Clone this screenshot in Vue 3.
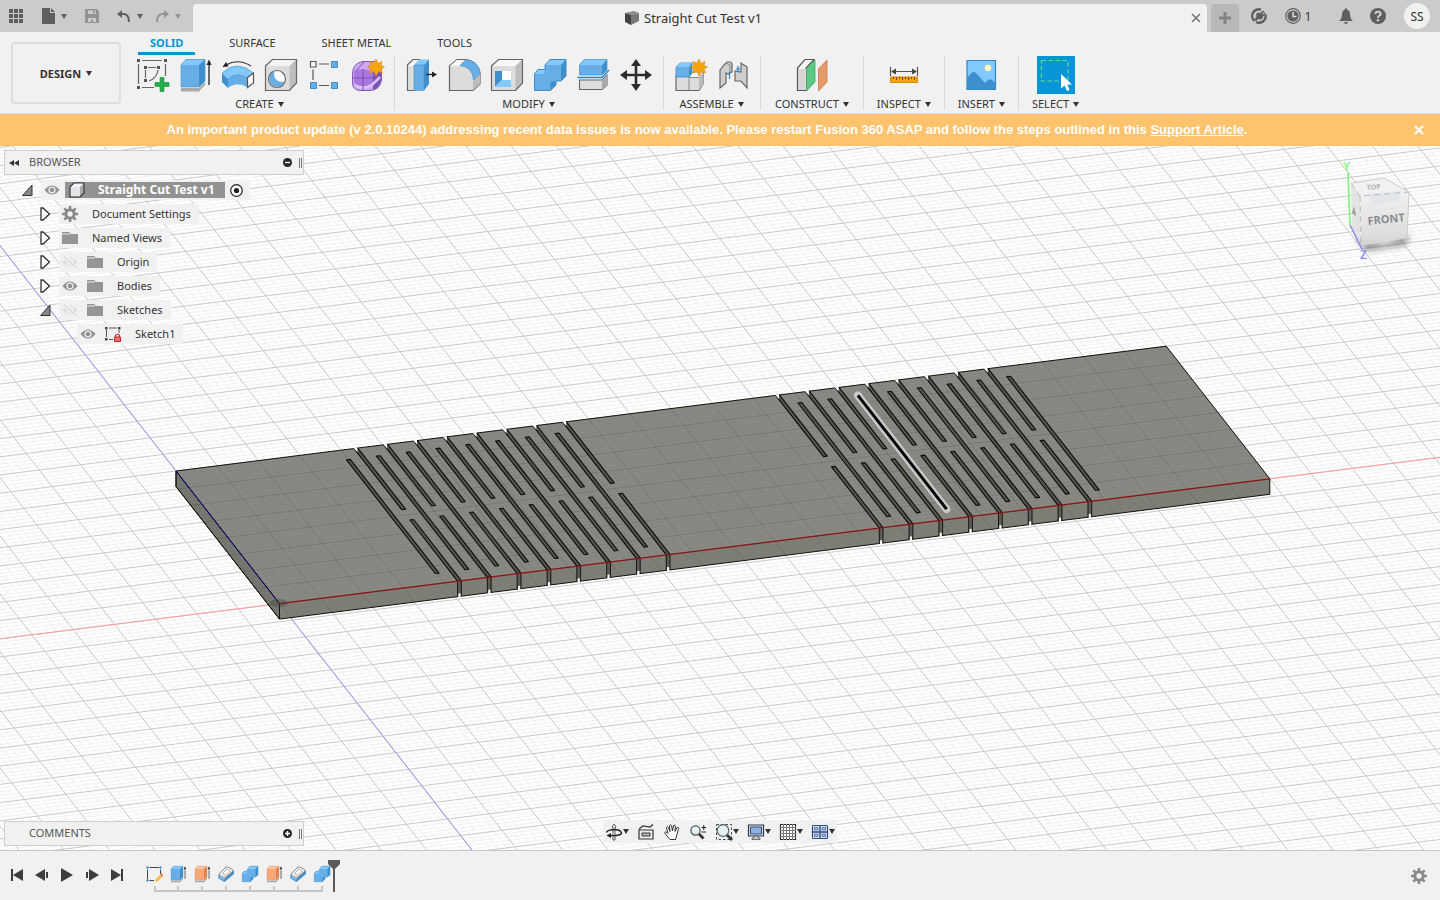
<template>
  <div class="app">
    <header class="titlebar">
      <nav class="quick" aria-label="Quick access">
        <button class="plain" aria-label="Data panel"><svg width="14" height="14" viewBox="0 0 14 14" v-html="glyphs.grid"></svg></button>
        <button class="plain" aria-label="File"><svg width="14" height="16" viewBox="0 0 14 16" v-html="glyphs.file"></svg><i class="caret"></i></button>
        <button class="plain dim" aria-label="Save"><svg width="14" height="14" viewBox="0 0 14 14" v-html="glyphs.save"></svg></button>
        <div class="history">
          <button class="plain" aria-label="Undo"><svg width="14" height="14" viewBox="0 0 14 14" v-html="glyphs.undo"></svg><i class="caret"></i></button>
          <button class="plain dim" aria-label="Redo"><svg width="14" height="14" viewBox="0 0 14 14" v-html="glyphs.redo"></svg><i class="caret"></i></button>
        </div>
      </nav>
      <div class="doc-tab">
        <svg width="16" height="16" viewBox="0 0 16 16" v-html="glyphs.doc"></svg>
        <span class="title">{{ documentName }}</span>
        <button class="plain close" aria-label="Close document"><svg width="10" height="10" viewBox="0 0 10 10"><path d="M1 1L9 9M9 1L1 9" stroke="#757575" stroke-width="1.6" /></svg></button>
      </div>
      <button class="new-tab" aria-label="New design"><svg width="14" height="14" viewBox="0 0 14 14"><path d="M7 1V13M1 7H13" stroke="#838383" stroke-width="3" /></svg></button>
      <div class="status">
        <button class="plain" aria-label="Extensions"><svg width="16" height="16" viewBox="0 0 16 16" v-html="glyphs.plug"></svg></button>
        <button class="plain jobs" aria-label="Job status"><svg width="16" height="16" viewBox="0 0 16 16" v-html="glyphs.clock"></svg>1</button>
        <button class="plain" aria-label="Notifications"><svg width="14" height="16" viewBox="0 0 14 16" v-html="glyphs.bell"></svg></button>
        <button class="plain" aria-label="Help"><svg width="16" height="16" viewBox="0 0 16 16" v-html="glyphs.help"></svg></button>
        <button class="avatar">SS</button>
      </div>
    </header>

    <section class="ribbon">
      <button class="workspace">DESIGN <i class="caret"></i></button>
      <div class="ribbon-main">
        <nav class="tabs">
          <button v-for="tab in tabs" :key="tab" :class="{ active: tab === activeTab }" @click="activeTab = tab">{{ tab }}</button>
        </nav>
        <div class="groups">
          <div v-for="group in groups" :key="group.name" class="group">
            <div class="tools">
              <button v-for="tool in group.tools" :key="tool" class="tool" :class="{ on: tool === 'select' }" :aria-label="tool">
                <svg width="36" height="36" viewBox="0 0 36 36" v-html="tools[tool]"></svg>
              </button>
            </div>
            <button class="group-name">{{ group.name }}<i class="caret"></i></button>
          </div>
        </div>
      </div>
    </section>

    <aside v-if="showBanner" class="banner">
      <p>An important product update (v 2.0.10244) addressing recent data issues is now available. Please restart Fusion 360 ASAP and follow the steps outlined in this <a href="#">Support Article</a>.</p>
      <button class="plain" aria-label="Dismiss" @click="showBanner = false"><svg width="10" height="10" viewBox="0 0 10 10"><path d="M1 1L9 9M9 1L1 9" stroke="#fff" stroke-width="2.2" /></svg></button>
    </aside>

    <main class="stage">
      <svg class="scene" viewBox="0 146 1440 704" preserveAspectRatio="xMidYMid slice">
        <defs>
          <clipPath id="body-clip"><path :d="outline" /></clipPath>
          <linearGradient id="cube-face" x1="0" y1="0" x2="0" y2="1"><stop offset="0" stop-color="#f0f0f1" /><stop offset="1" stop-color="#d6d6d8" /></linearGradient>
          <filter id="soft" x="-30%" y="-60%" width="160%" height="220%"><feGaussianBlur stdDeviation="3" /></filter>
        </defs>
        <rect x="0" y="146" width="1440" height="704" fill="#fff" />
        <path :d="minorGrid" class="minor" />
        <path :d="majorGrid" class="major" />
        <path :d="line(-12, 0, 0, 0)" stroke="#ff9c9c" />
        <path :d="line(24, 0, 32, 0)" stroke="#ff9c9c" />
        <path :d="line(0, -18, 0, 0)" stroke="#9292f5" />
        <path :d="line(0, 8, 0, 28)" stroke="#9292f5" />

        <!-- plate -->
        <path :d="outline" fill="#888982" />
        <path :d="leftFace" fill="#76776e" />
        <path :d="frontFace" fill="#7e7f76" />
        <g clip-path="url(#body-clip)">
          <path :d="minorGrid" class="minor on-body" />
          <path :d="majorGrid" class="major on-body" />
        </g>
        <path :d="outline" class="edge" />
        <path :d="leftFace" class="edge" />
        <path :d="line(0, 0, 0, 8)" stroke="#00007c" />
        <path v-for="(slot, i) in slots" :key="i" :d="slot" class="slot" />
        <g v-for="(n, i) in notches" :key="'n' + i">
          <path :d="n.wall" fill="#5c5d56" />
          <path :d="n.edges" class="edge" />
          <path :d="n.tip" fill="#fff" />
          <path :d="n.back" fill="#fff" />
        </g>
        <path :d="line(0, 0, 24, 0)" stroke="#8c1313" stroke-width="1.3" />
        <ellipse cx="279" cy="603" rx="9" ry="4" fill="#3a3b35" opacity=".35" />
        <path :d="picked" class="picked-halo" />
        <path :d="picked" class="picked" />

        <!-- orientation cube -->
        <g>
          <path d="M1356 238L1384 244L1410 234L1406 245L1366 251Z" fill="#666" opacity=".7" filter="url(#soft)" />
          <path d="M1351 183L1384 178L1409 192L1360 196Z" fill="#f1f1f2" opacity=".9" />
          <path d="M1351 183L1360 196V247L1352 230Z" fill="#dfdfe1" opacity=".85" />
          <path d="M1360 196L1409 192L1407 238L1361 246Z" fill="url(#cube-face)" opacity=".92" />
          <path d="M1369 194L1401 191L1399 200L1374 205Z" fill="#dfe3ea" opacity=".8" />
          <path d="M1351 183L1360 196L1409 192M1360 196L1361 246" stroke="#bbb" fill="none" stroke-dasharray="6 4" />
          <path d="M1351 183L1384 178L1409 192L1407 238" stroke="#ccc" fill="none" />
          <text x="1368" y="225" class="cube-text" transform="rotate(-6 1368 225)">FRONT</text>
          <text x="1367" y="190" class="cube-top" transform="rotate(-5 1367 190)">TOP</text>
          <path d="M1352 213L1354 206L1356 216Z" fill="#999" />
          <path d="M1348 172L1350 225" stroke="#7df07d" stroke-width="1.6" />
          <path d="M1350 225L1362 249" stroke="#8c8cf0" stroke-width="1.6" />
          <text x="1343" y="171" class="axis y">Y</text>
          <text x="1360" y="259" class="axis z">Z</text>
        </g>
      </svg>

      <aside class="browser">
        <div class="panel">
          <svg width="10" height="6" viewBox="0 0 10 6"><path d="M5 0V6L0 3ZM10 0V6L5 3Z" fill="#333" /></svg>
          <h2>BROWSER</h2>
          <button class="plain" aria-label="Collapse browser"><svg width="9" height="9" viewBox="0 0 9 9"><circle cx="4.500" cy="4.500" r="4.500" fill="#262626" /><path d="M2 4.500H7" stroke="#fff" stroke-width="1.400" /></svg></button>
          <i class="grip"></i>
        </div>
        <ul class="tree">
          <li v-for="node in nodes" :key="node.name" :class="'depth-' + node.depth">
            <svg v-if="node.state" class="twist" width="12" height="14" viewBox="0 0 12 14" v-html="glyphs[node.state]"></svg>
            <div class="node">
              <svg v-for="icon in node.icons" :key="icon" width="16" height="16" viewBox="0 0 16 16" v-html="glyphs[icon]"></svg>
              <span v-if="node.root" class="root">
                <svg width="16" height="16" viewBox="0 0 16 16" v-html="glyphs.part"></svg>{{ node.name }}
              </span>
              <span v-else class="name">{{ node.name }}</span>
              <svg v-if="node.root" class="target" width="13" height="13" viewBox="0 0 13 13"><circle cx="6.500" cy="6.500" r="5.800" fill="#fff" stroke="#222" stroke-width="1.200" /><circle cx="6.500" cy="6.500" r="2.600" fill="#222" /></svg>
            </div>
          </li>
        </ul>
      </aside>

      <div class="panel comments">
        <h2>COMMENTS</h2>
        <button class="plain" aria-label="Expand comments"><svg width="9" height="9" viewBox="0 0 9 9"><circle cx="4.500" cy="4.500" r="4.500" fill="#262626" /><path d="M2 4.500H7M4.500 2V7" stroke="#fff" stroke-width="1.400" /></svg></button>
        <i class="grip"></i>
      </div>

      <nav class="navbar" aria-label="Navigation">
        <button v-for="item in navigation" :key="item.icon" class="plain" :aria-label="item.icon">
          <svg width="18" height="18" viewBox="0 0 18 18" v-html="glyphs[item.icon]"></svg>
          <i v-if="item.menu" class="caret"></i>
        </button>
      </nav>
    </main>

    <footer class="timeline">
      <div class="player">
        <button v-for="p in player" :key="p.name" class="plain" :aria-label="p.name"><svg width="14" height="14" viewBox="0 0 14 14"><path :d="p.d" fill="#3d3d3d" /></svg></button>
      </div>
      <div class="features">
        <div class="feature-row">
          <button v-for="(f, i) in features" :key="i" class="plain" :aria-label="f"><svg width="18" height="18" viewBox="0 0 36 36" v-html="tools[f]"></svg></button>
        </div>
        <svg width="192" height="6" viewBox="0 0 192 6"><path d="M13 0V5H180V0M36 0V5M60 0V5M84 0V5M108 0V5M132 0V5M156 0V5" fill="none" stroke="#c6c6c6" stroke-width="2" /></svg>
        <svg class="marker" width="12" height="32" viewBox="0 0 12 32"><path d="M0 0H12V4L7 9V32H5V9L0 4Z" fill="#5a5a5a" /></svg>
      </div>
      <button class="plain settings" aria-label="Timeline settings"><svg width="16" height="16" viewBox="0 0 16 16" v-html="glyphs.gear"></svg></button>
    </footer>
  </div>
</template>

<script setup>
import { ref } from 'vue';

const documentName = 'Straight Cut Test v1';
const tabs = ['SOLID', 'SURFACE', 'SHEET METAL', 'TOOLS'];
const activeTab = ref('SOLID');
const showBanner = ref(true);

const groups = [
  { name: 'CREATE', tools: ['sketch', 'extrude', 'revolve', 'hole', 'pattern', 'form'] },
  { name: 'MODIFY', tools: ['press', 'fillet', 'shell', 'combine', 'split', 'move'] },
  { name: 'ASSEMBLE', tools: ['component', 'joint'] },
  { name: 'CONSTRUCT', tools: ['plane'] },
  { name: 'INSPECT', tools: ['measure'] },
  { name: 'INSERT', tools: ['image'] },
  { name: 'SELECT', tools: ['select'] },
];

const nodes = [
  { name: documentName, depth: 0, state: 'open', icons: ['eye'], root: true },
  { name: 'Document Settings', depth: 1, state: 'closed', icons: ['gear'] },
  { name: 'Named Views', depth: 1, state: 'closed', icons: ['folder'] },
  { name: 'Origin', depth: 1, state: 'closed', icons: ['hidden', 'folder'] },
  { name: 'Bodies', depth: 1, state: 'closed', icons: ['eye', 'folder'] },
  { name: 'Sketches', depth: 1, state: 'open', icons: ['hidden', 'folder'] },
  { name: 'Sketch1', depth: 2, icons: ['eye', 'locked'] },
];

const navigation = [
  { icon: 'orbit', menu: true },
  { icon: 'look' },
  { icon: 'pan' },
  { icon: 'zoom' },
  { icon: 'fit', menu: true },
  { icon: 'display', menu: true },
  { icon: 'gridset', menu: true },
  { icon: 'views', menu: true },
];

const player = [
  { name: 'Start', d: 'M1 1H3V13H1ZM13 1V13L3 7Z' },
  { name: 'Step back', d: 'M10 1V13L0 7ZM11 4H13V10H11Z' },
  { name: 'Play', d: 'M1 0L13 7L1 14Z' },
  { name: 'Step forward', d: 'M1 4H3V10H1ZM4 1L14 7L4 13Z' },
  { name: 'End', d: 'M1 1L11 7L1 13ZM11 1H13V13H11Z' },
];

const features = ['sketchEdit', 'extrude', 'extrudeCut', 'chamfer', 'combine', 'extrudeCut', 'chamfer', 'combine'];

// sketch plane: one unit is one major grid cell, z runs towards the viewer
const project = (x, z, drop = 0) => {
  const px = 176 + x * 41.26 + z * 12.94;
  const py = 471 - x * 5.2 + z * 16.57 + drop;
  return `${px.toFixed(1)} ${py.toFixed(1)}`;
};
const line = (x1, z1, x2, z2) => x1 === x2
  ? `M${project(x1, z1)}L${project(x2, z2)}`
  : `M${project(x1, z1 + 8)}L${project(x2, z2 + 8)}`;
const poly = (...points) => 'M' + points.join('L') + 'Z';

const gridPath = (step, skip) => {
  let d = '';
  for (let i = -20 * step; i <= 52 * step; i++) {
    if (skip && i % step === 0) continue;
    const v = i / step;
    d += `M${project(v, -40)}L${project(v, 50)}M${project(-20, v)}L${project(52, v)}`;
  }
  return d;
};
const majorGrid = gridPath(1, false);
const minorGrid = gridPath(5, true);

const T = 15.5;
const outline = poly(project(0, 0), project(24, 0), project(24, 8), project(24, 8, T), project(0, 8, T), project(0, 0, T));
const leftFace = poly(project(0, 0), project(0, 8), project(0, 8, T), project(0, 0, T));
const frontFace = poly(project(0, 8), project(24, 8), project(24, 8, T), project(0, 8, T));

const W = 0.045;
const cut = (x, z1, z2) => poly(project(x - W, z1), project(x + W, z1), project(x + W, z2), project(x - W, z2));
const slots = [];
const notches = [];
for (let k = 0; k < 16; k++) {
  const x = 4 + k * 0.3613;
  for (const s of [x, 24 - x]) {
    if (k % 2 === 0) {
      slots.push(cut(s, 0.57, 7.43));
      continue;
    }
    slots.push(cut(s, 0, 3.69), cut(s, 4.31, 8));
    notches.push({
      wall: poly(project(s - W, 8), project(s + W, 8), project(s + W, 8, T), project(s - W, 8, T)),
      edges: `M${project(s - W, 8)}L${project(s - W, 8, T)}M${project(s + W, 8)}L${project(s + W, 8, T)}`,
      tip: poly(project(s - W + 0.02, 8, T - 3), project(s + W - 0.02, 8, T - 3), project(s + W - 0.02, 8, T + 2), project(s - W + 0.02, 8, T + 2)),
      back: poly(project(s - W - 0.02, 0, -1), project(s + W - 0.01, 0, -1), project(s + W - 0.01, 0, 4)),
    });
  }
}
const pickedX = 24 - (4 + 10 * 0.3613) - 0.04;
const picked = `M${project(pickedX, 0.57)}L${project(pickedX, 7.43)}`;

const star = '<path d="M27 2L29 6.500L33 4.500L32 8.500L35.500 10L32 12L33.500 16L29.500 14.500L27 19L25 14.500L20.500 16L22 12L18.500 10L22 8L20.500 4.500L25 6Z" fill="#f7a50c" stroke="#e08c00" stroke-width=".6"/>';
const box = (front, top, side, edge) =>
  `<path d="M4 8L9 2.500H28V24L22 30H4Z" fill="${front}"/><path d="M4 8L9 2.500H28L22 8Z" fill="${top}"/><path d="M22 8L28 2.500V24L22 30Z" fill="${side}"/><path d="M4 31H22L28 25V28L22 34.500H4Z" fill="#aaa"/><path d="M4 8L9 2.500H28V24L22 30H4Z" fill="none" stroke="${edge}" stroke-width=".6"/><path d="M32 28V6" stroke="#222" stroke-width="1.300"/><path d="M29.500 8L32 2.500L34.500 8Z" fill="#222"/>`;

const tools = {
  sketch: '<path d="M8 3.500H28M4.500 7V27M8 30.500H20M31.500 7V19M14 10.500H22M11.500 13V21M24 13Q23 21 15 24" fill="none" stroke="#666" stroke-width="1.200"/><path d="M3 2h3v3H3zM30 2h3v3h-3zM3 29h3v3H3zM10 9h3v3h-3zM23 9h3v3h-3zM10 22h3v3h-3z" fill="#555"/><path d="M26 20.500h4v5h5v4h-5v5h-4v-5h-5v-4h5z" fill="#27ae4e" stroke="#16943b" stroke-width=".6"/>',
  extrude: box('#67aee6', '#85c8fb', '#3f8fcb', '#4192cf'),
  extrudeCut: box('#f8a878', '#fdc8a0', '#dd8551', '#cf7d4a'),
  revolve: '<path d="M2 16Q17 2 33.500 16L28 21Q17 13 8 22Z" fill="#85c8fb"/><path d="M2 16L8 22V31L2 25Z" fill="#3f8fcb"/><path d="M8 22Q17 14 27 20.500V30Q17 24 8 31Z" fill="#67aee6"/><path d="M2 16Q17 2 33.500 16M8 22Q17 14 27 20.500" fill="none" stroke="#4192cf" stroke-width=".7"/><path d="M27.500 20.500L33.500 16V26L27.500 30.500Z" fill="#fff" stroke="#555" stroke-width="1.200"/><path d="M6 8Q18 1 31 9" fill="none" stroke="#333" stroke-width="1.200"/><path d="M2.500 10L6 5L8.500 9.500Z" fill="#222"/>',
  hole: '<path d="M2.500 9L9.500 2.500H33.500V26L26.500 33.500H2.500Z" fill="#dcdcdc"/><path d="M2.500 9L9.500 2.500H33.500L26.500 9Z" fill="#f3f3f3"/><path d="M26.500 9L33.500 2.500V26L26.500 33.500Z" fill="#bebebe"/><path d="M2.500 9L9.500 2.500H33.500V26L26.500 33.500H2.500Z" fill="none" stroke="#666" stroke-width="1.200"/><circle cx="14" cy="22" r="8.500" fill="#fff" stroke="#666" stroke-width="1.200"/><path d="M11 15A7.500 7.500 0 1 0 21 25A8 8 0 0 1 11 15Z" fill="#67aee6" stroke="#3f8fcb" stroke-width=".6"/>',
  pattern: '<path d="M13 7H23M7 12.500V23M13 28.500H23" stroke="#555" stroke-width="1.200"/><path d="M4.500 4.500h5.500v5.500H4.500z" fill="#fff" stroke="#555" stroke-width="1.200"/><path d="M25.500 4.500h6v6h-6zM4.500 25.500h6v6h-6zM25.500 25.500h6v6h-6z" fill="#67aee6" stroke="#3f8fcb"/>',
  form: '<path d="M3.500 17Q3.500 6 14 4.500H25Q32.500 6 32.500 15V23Q31 33 21 33.500H11Q3.500 33 3.500 26Z" fill="#cfa6f5" stroke="#8458b5"/><path d="M5 14Q14 10 24 15V26Q20 30 12 29Q5 29 5 24Z" fill="#a878e0"/><path d="M24 15L32 9V24Q30 31 24 33Z" fill="#7d53b5"/><path d="M6 28Q14 34 24 27L31 20" stroke="#dcc4fa" stroke-width="2.500" fill="none"/><path d="M14 12V33M4 21H24L32 17M7 14L15 5M22 14L28 6" stroke="#7d50ab" fill="none"/>' + star,
  press: '<path d="M4.500 8L10 2.500H17V28L11 33.500H4.500Z" fill="#f5f5f5" stroke="#666" stroke-width="1.200"/><path d="M5 9H11V33H5Z" fill="#dcdcdc"/><path d="M11 8L16 2.500H26L21 8Z" fill="#85c8fb"/><path d="M11 8H21V33.500H11Z" fill="#67aee6" stroke="#4192cf" stroke-width=".6"/><path d="M21 8L26 2.500V27L21 33.500Z" fill="#3f8fcb"/><path d="M23 17.500H30" stroke="#222" stroke-width="1.300"/><path d="M29 14.500L34 17.500L29 20.500Z" fill="#222"/>',
  fillet: '<path d="M3.500 9L11 2.500H19Q32 4 34 17V27L27 33.500H3.500Z" fill="#dcdcdc" stroke="#666" stroke-width="1.200"/><path d="M4 9L11 3H21L14 9Z" fill="#f8f8f8"/><path d="M27 24L34 17V27L27 33Z" fill="#bbb"/><path d="M14 8.500L20 2.500Q32 4 34.500 16L27.500 23Q27 10 14 8.500Z" fill="#67aee6" stroke="#3f8fcb" stroke-width=".7"/>',
  shell: '<path d="M2.500 9L9.500 2.500H33.500V26L26.500 33.500H2.500Z" fill="#dcdcdc"/><path d="M2.500 9L9.500 2.500H33.500L26.500 9Z" fill="#f8f8f8"/><path d="M26.500 9L33.500 2.500V26L26.500 33.500Z" fill="#bebebe"/><path d="M2.500 9L9.500 2.500H33.500V26L26.500 33.500H2.500Z" fill="none" stroke="#666" stroke-width="1.200"/><path d="M6 14H22V30H6Z" fill="#fff"/><path d="M6 14L13 14V23L6 30Z" fill="#3f8fcb"/><path d="M6 30L13 23H22V30Z" fill="#85c8fb"/>',
  combine: '<path d="M2.500 17L6 12.500H13V8L18 2.500H34V19L29 24H24V28L18.500 33.500H2.500Z" fill="#67aee6"/><path d="M13 8L18 2.500H34L29 8ZM2.500 17L6 12.500H13L12 17Z" fill="#85c8fb"/><path d="M29 8L34 2.500V19L29 24ZM18.500 25L24 24V28L18.500 33.500Z" fill="#3f8fcb"/><path d="M2.500 17L6 12.500H13V8L18 2.500H34V19L29 24H24V28L18.500 33.500H2.500Z" fill="none" stroke="#3384c2" stroke-width=".9"/>',
  split: '<path d="M4.500 8L9 2.500H32L27 8Z" fill="#85c8fb"/><path d="M4.500 8H27V18H4.500Z" fill="#67aee6"/><path d="M27 8L32 2.500V13L27 18Z" fill="#3f8fcb"/><path d="M4.500 8L9 2.500H32V13L27 18H4.500Z" fill="none" stroke="#3f8fcb" stroke-width=".7"/><path d="M2.500 20.500H27L34 13" fill="none" stroke="#1787d8" stroke-width="1.300"/><path d="M4.500 23H27L32 18V28L27 32.500H4.500Z" fill="#dcdcdc" stroke="#666" stroke-width="1.100"/><path d="M27 23L32 18V28L27 32.500Z" fill="#aaa"/>',
  move: '<path d="M18 6V30M6 18H30" stroke="#2d2d2d" stroke-width="2.600"/><path d="M18 2L23 9H13ZM18 34L23 27H13ZM2 18L9 13V23ZM34 18L27 13V23Z" fill="#2d2d2d"/>',
  component: '<path d="M4 19H17L21 15H31V27L27 33.500H4Z" fill="#dcdcdc" stroke="#666" stroke-width="1.200"/><path d="M17 20L20 15.500H31L27 20Z" fill="#f6f6f6"/><path d="M27 20L31 15.500V28L27 33Z" fill="#bbb"/><path d="M17 19V33M17 20.500H27" stroke="#888" fill="none"/><path d="M4 10L8 6H20V16L17 20H4Z" fill="#67aee6" stroke="#3f8fcb" stroke-width=".8"/><path d="M4 10L8 6H20L17 10Z" fill="#85c8fb"/><path d="M17 10L20 6V16L17 20Z" fill="#3f8fcb"/>' + star,
  joint: '<path d="M5 13L9 8L12 5H15Q17 5 17 8V15L13 17L11 16V26L5 31Z" fill="#cfcfcf" stroke="#666" stroke-width="1.200"/><path d="M32 10L26 6V15L20 14V24L26 24L32 31Z" fill="#cfcfcf" stroke="#666" stroke-width="1.200"/><path d="M11 6L15 8V16" stroke="#888" fill="none"/><path d="M14.500 15V22M23 9V15M21 12H25" stroke="#1787d8" stroke-width="1.200"/>',
  plane: '<path d="M3.500 11L11 2.500H20L12 11V33.500H3.500Z" fill="#f6f6f6" stroke="#555" stroke-width="1.200"/><path d="M4 12H12V33H4Z" fill="#d6d6d6"/><path d="M12.500 12L21 3V25L12.500 34Z" fill="#5bc884" stroke="#3aa863" stroke-width=".8"/><path d="M24.500 12L33 3V25L24.500 34Z" fill="#e69a68" stroke="#c47b4a" stroke-width=".8"/>',
  measure: '<path d="M4.500 10V19M31.500 10V19M7 14.500H29" stroke="#555" stroke-width="1.200"/><path d="M5 14.500L10 11.500V17.500ZM31 14.500L26 11.500V17.500Z" fill="#444"/><path d="M4.500 20H31.500V25.500H4.500Z" fill="#f7a50c" stroke="#d98a00"/><path d="M7.500 20V22M10.500 20V23M13.500 20V22M16.500 20V23M19.500 20V22M22.500 20V23M25.500 20V22M28.500 20V23" stroke="#7a4b00"/>',
  image: '<path d="M4 3.500H32.500V32.500H4Z" fill="#80c8fd" stroke="#3384c2" stroke-width="1.200"/><path d="M4 21L9 15.500Q11 14.500 13 16L22 26L25 23Q27 21.500 29 23L32.500 26V32H4Z" fill="#3d90cd"/><circle cx="25" cy="11" r="3.300" fill="#fdfdd0" stroke="#d8d88a" stroke-width=".6"/>',
  select: '<path d="M3.500 3.500H30V24H3.500Z" fill="none" stroke="#65d98a" stroke-width="1.200" stroke-dasharray="4.500 2.500"/><path d="M23 17V31.500L26.500 28.500L29 34L31.500 33L29.500 27.500H34Z" fill="#fff"/>',
  sketchEdit: '<path d="M9 5H28M5 9V28M31 9V18M9 31H18" fill="none" stroke="#444" stroke-width="2"/><path d="M3 3h4v4H3zM29 3h4v4h-4zM3 29h4v4H3z" fill="#1787d8"/><path d="M20 34L22 28L31 19L35 23L26 32Z" fill="#f5b93e"/><path d="M31 19L33 17L36 21L35 23Z" fill="#e33"/>',
  chamfer: '<path d="M2 20L14 28L34 11V18L15 34L2 26Z" fill="#3f8fcb"/><path d="M2 20L14 28V34L2 26Z" fill="#67aee6"/><path d="M4 18L18 4Q22 3 31 9Q33 12 30 14L16 25Q12 25 4 20Z" fill="#f0f0f0" stroke="#666" stroke-width="1.500"/><path d="M11 17L20 8L26 12L17 20Z" fill="#fff" stroke="#888" stroke-width="1.200"/>',
};

const glyphs = {
  grid: '<path d="M0 0h4v4H0zM5 0h4v4H5zM10 0h4v4h-4zM0 5h4v4H0zM5 5h4v4H5zM10 5h4v4h-4zM0 10h4v4H0zM5 10h4v4H5zM10 10h4v4h-4z" fill="#5f5f5f"/>',
  file: '<path d="M1 0H9V5H14V16H1ZM10 0L14 4H10Z" fill="#5f5f5f"/>',
  save: '<path d="M0 0H12L14 2V14H0Z" fill="#5f5f5f"/><path d="M3 1.500H11V5H3ZM3 9H11V13H3Z" fill="#cbcbcb"/><path d="M8 2H10V4.500H8ZM6 10.500H8V14H6Z" fill="#5f5f5f"/>',
  undo: '<path d="M5 1V9L0 5Z" fill="#5f5f5f"/><path d="M4 5H7Q12 5.500 12 13" fill="none" stroke="#5f5f5f" stroke-width="2"/>',
  redo: '<path d="M9 1V9L14 5Z" fill="#5f5f5f"/><path d="M10 5H7Q2 5.500 2 13" fill="none" stroke="#5f5f5f" stroke-width="2"/>',
  doc: '<path d="M1 3L10 1L15 3L7 5Z" fill="#8a8a8a"/><path d="M1 3L7 5V15L1 12Z" fill="#444"/><path d="M7 5L15 3V11L7 15Z" fill="#777"/>',
  plug: '<path d="M3.500 13A6.700 6.700 0 0 1 10 1.600M14.600 7A6.700 6.700 0 0 1 5 14" fill="none" stroke="#5f5f5f" stroke-width="2.400"/><path d="M5.500 8L5 6L7 4.500L9 5L12 2.500L13.500 3.500L11 6L11.500 6.500L14 4.500L15 6L12 8.500L11.500 10.500L9.500 11.500L7.500 11L5 13L3.500 12Z" fill="#5f5f5f"/>',
  clock: '<circle cx="8" cy="8" r="7.300" fill="none" stroke="#5f5f5f" stroke-width="1.200"/><circle cx="8" cy="8" r="5.600" fill="#5f5f5f"/><path d="M8 4V8.500H11.500" stroke="#ddd" stroke-width="1.500" fill="none"/>',
  bell: '<path d="M7 0Q8 0 8 1.500Q11 2.500 11 6Q11 11 14 13H0Q3 11 3 6Q3 2.500 6 1.500Q6 0 7 0ZM5 14H9Q8.500 16 7 16Q5.500 16 5 14Z" fill="#5f5f5f"/>',
  help: '<circle cx="8" cy="8" r="8" fill="#5f5f5f"/><path d="M5.300 6Q5.500 3.600 8 3.600Q10.600 3.600 10.600 6Q10.600 7.300 9 8Q8 8.500 8 10" fill="none" stroke="#d6d6d6" stroke-width="1.900"/><circle cx="8" cy="12.200" r="1.200" fill="#d6d6d6"/>',
  open: '<path d="M11 2V12.500H1.500Z" fill="#888" stroke="#333"/>',
  closed: '<path d="M2 1H4L10.500 7L4 13H2Z" fill="#fff" stroke="#333" stroke-width="1.300"/>',
  eye: '<path d="M.5 8Q8-1 15.500 8Q8 17 .5 8Z" fill="#909090"/><circle cx="8" cy="8" r="3.600" fill="#eee"/><circle cx="8" cy="8" r="2.200" fill="#909090"/>',
  hidden: '<path d="M.5 8Q8-1 15.500 8Q8 17 .5 8Z" fill="#dedede"/><circle cx="8" cy="8" r="3.600" fill="#f1f1f1"/><circle cx="8" cy="8" r="2" fill="#dedede"/><path d="M2 2.500L14 13.500" stroke="#f1f1f1" stroke-width="3"/><path d="M2 2.500L14 13.500" stroke="#d8d8d8" stroke-width="1.200"/>',
  gear: '<circle cx="8" cy="8" r="4.200" fill="none" stroke="#8a8a8a" stroke-width="3"/><path d="M8 0V3M8 13V16M0 8H3M13 8H16M2.300 2.300L4.400 4.400M11.600 11.600L13.700 13.700M13.700 2.300L11.600 4.400M4.400 11.600L2.300 13.700" stroke="#8a8a8a" stroke-width="2.600"/>',
  folder: '<path d="M0 2H7L9 4H16V14H0Z" fill="#959595"/><path d="M0 4H8" stroke="#e8e8e8"/>',
  part: '<path d="M1 5L5 1H15V11L11 15H1Z" fill="#f6f6f8"/><path d="M11 5L15 1V11L11 15Z" fill="#aaa"/><path d="M1 5H11V15H1Z" fill="#e4e4e8"/><path d="M1 5L5 1H15V11L11 15H1Z" fill="none" stroke="#333" stroke-width="1.100"/>',
  locked: '<path d="M4 2H12M1.500 4V11M14 4V7M4 13.500H8" stroke="#555"/><path d="M0 1h2.500v2.500H0zM13 1h2.500v2.500H13zM0 12h2.500v2.500H0z" fill="#444"/><path d="M9.500 11H15.500V15.500H9.500Z" fill="#e87070" stroke="#c22"/><path d="M10.500 11V9.500Q12.500 7 14.500 9.500V11" fill="none" stroke="#c22" stroke-width="1.200"/>',
  orbit: '<path d="M9 1L11 4H10V17H8V4H7Z" fill="#fff" stroke="#333" stroke-width=".8"/><path d="M5 12.500Q17 13 16.500 9.500Q15 6.500 9 6.500Q2 7 1.500 9.500" fill="none" stroke="#222" stroke-width="1.300"/><path d="M1.500 12.500L6 10V15Z" fill="#222"/>',
  look: '<path d="M2 7H16V16H2Z" fill="#eee" stroke="#333" stroke-width="1.200"/><path d="M5 10H13V13H5Z" fill="#bbb" stroke="#333"/><path d="M2 6L6 3L13 4L16 1.500" fill="none" stroke="#333" stroke-width="1.200"/>',
  pan: '<path d="M5.500 15L1.500 9.500Q2 8 4 9.500L5 10.500L3.500 4.500Q4.500 3 5.500 4.500L7 8.500L6.500 2.500Q8 1 8.500 2.500L9.500 8L10.500 2.500Q12 1.500 12.300 3L12 8.500L14 4.500Q15.500 4 15.500 5.500L14 11.500L12.500 16.500H7Z" fill="#fff" stroke="#333"/>',
  zoom: '<circle cx="6.500" cy="7.500" r="4.600" fill="#e4f0f2" stroke="#455" stroke-width="1.200"/><path d="M10 11L14.500 15.500" stroke="#333" stroke-width="2.600"/><path d="M12.500 4.500H17M14.750 2V7M12.500 9H17" stroke="#222"/>',
  fit: '<path d="M1.500 1.500H16.500V16.500H1.500Z" fill="none" stroke="#444" stroke-dasharray="2.500 2"/><circle cx="8" cy="7.500" r="5.800" fill="#e4f0f2" stroke="#566" stroke-width="1.200"/><path d="M12 12L17 17" stroke="#333" stroke-width="2.800"/>',
  display: '<path d="M1.500 2H16.500V13H1.500Z" fill="#dfe4ec" stroke="#334" stroke-width="1.200"/><path d="M3.500 4H14.500V11H3.500Z" fill="#8fb0df" stroke="#3a4d7a"/><path d="M7 13H11V15H13V16.500H5V15H7Z" fill="#ccc" stroke="#444" stroke-width=".7"/>',
  gridset: '<path d="M1.500 1.500H16.500V16.500H1.500Z" fill="#fff" stroke="#333" stroke-width="1.200"/><path d="M4.500 1V17M7.500 1V17M10.500 1V17M13.500 1V17M1 4.500H17M1 7.500H17M1 10.500H17M1 13.500H17" stroke="#777"/>',
  views: '<rect x="1.500" y="2.500" width="15" height="13" rx="1" fill="#dbe6f5" stroke="#2f4a7c" stroke-width="1.200"/><path d="M9 2V16M1 9H17" stroke="#2f4a7c" stroke-width="1.400"/><path d="M3.500 4.500H7V7H3.500ZM11 4.500H14.500V7H11ZM3.500 11H7V13.500H3.500ZM11 11H14.500V13.500H11Z" fill="#9db9e4" stroke="#54709f" stroke-width=".8"/>',
};
</script>

<style>
body {
  margin: 0;
}
</style>

<style scoped>
.app {
  display: flex;
  flex-direction: column;
  height: 100vh;
  overflow: hidden;
  background: #f1f1f1;
  color: #333;
  font-family: "Noto Sans", "Open Sans", sans-serif;
  font-size: 12px;
}

button {
  font: inherit;
  color: inherit;
  cursor: pointer;
}

svg {
  display: block;
  flex: none;
}

.plain {
  display: flex;
  align-items: center;
  gap: 6px;
  padding: 0;
  border: 0;
  background: none;
}

.caret {
  border: 3px solid transparent;
  border-top: 5px solid #333;
  border-bottom: 0;
}

.titlebar {
  display: flex;
  flex: none;
  height: 32px;
  background: #cbcbcb;
}

.quick {
  display: flex;
  align-items: center;
  gap: 18px;
  box-sizing: border-box;
  width: 193px;
  padding-left: 9px;
}

.quick .caret {
  border-top-color: #5f5f5f;
}

.history {
  display: flex;
  gap: 12px;
}

.dim {
  opacity: 0.5;
}

.doc-tab {
  display: flex;
  flex: 1;
  align-items: center;
  gap: 4px;
  margin-top: 4px;
  padding-right: 6px;
  border-radius: 4px 4px 0 0;
  background: #f1f1f1;
}

.doc-tab::before {
  content: "";
  flex: 1;
}

.title {
  margin-right: 8px;
  font-size: 13px;
}

.close {
  flex: 1;
  justify-content: flex-end;
}

.new-tab {
  display: flex;
  align-items: center;
  justify-content: center;
  width: 28px;
  margin: 4px 0 0 4px;
  padding: 0;
  border: 0;
  border-radius: 4px 4px 0 0;
  background: #b8b8b8;
}

.status {
  display: flex;
  align-items: center;
  justify-content: space-between;
  box-sizing: border-box;
  width: 201px;
  padding: 0 10px 0 12px;
}

.jobs {
  gap: 4px;
  margin-right: 10px;
}

.avatar {
  width: 26px;
  height: 26px;
  padding: 0;
  border: 0;
  border-radius: 50%;
  background: #f1f1f1;
}

.ribbon {
  display: flex;
  flex: none;
  height: 81px;
  border-bottom: 1px solid #dcdcdc;
}

.workspace {
  display: flex;
  align-items: center;
  justify-content: center;
  gap: 5px;
  width: 110px;
  height: 62px;
  margin: 10px 13px 0 11px;
  border: 2px solid #dedede;
  border-radius: 4px;
  background: #f1f1f1;
  font-size: 11px;
  font-weight: 700;
}

.tabs {
  display: flex;
  gap: 22px;
  padding-left: 4px;
}

.tabs button {
  height: 23px;
  padding: 0 12px;
  border: 0;
  border-bottom: 3px solid transparent;
  background: none;
  font-size: 11px;
}

.tabs .active {
  border-color: #0696d7;
  color: #0696d7;
  font-weight: 700;
}

.groups {
  display: flex;
  padding-top: 1px;
}

.group {
  display: flex;
  flex-direction: column;
  align-items: center;
  height: 54px;
  padding: 0 13px;
  border-right: 1px solid #d8d8d8;
}

.group:nth-child(1) {
  padding: 0 9px 0 0;
}

.group:nth-child(2),
.group:nth-child(3) {
  padding: 0 9px 0 8px;
}

.group:nth-child(4) {
  padding: 0 14px;
}

.group:last-child {
  border: 0;
}

.tools {
  display: flex;
  gap: 7px;
}

.tool {
  width: 36px;
  height: 38px;
  padding: 1px 0;
  border: 0;
  background: none;
}

.tool.on {
  width: 38px;
  padding: 1px;
  background: #0696d7;
}

.group-name {
  display: flex;
  align-items: center;
  gap: 4px;
  padding: 0;
  border: 0;
  background: none;
  font-size: 11px;
  line-height: 20px;
}

.banner {
  display: flex;
  flex: none;
  align-items: center;
  height: 32px;
  padding-right: 16px;
  background: #ffc36e;
  color: #fff;
  font: bold 13px "Liberation Sans", Arial, sans-serif;
}

.banner p {
  flex: 1;
  margin: 0;
  padding-bottom: 2px;
  text-align: center;
}

.banner a {
  color: #fff;
}

.stage {
  position: relative;
  flex: 1;
  min-height: 0;
}

.scene {
  position: absolute;
  width: 100%;
  height: 100%;
}

.scene path {
  stroke-linejoin: round;
}

.minor {
  fill: none;
  stroke: #eeeeee;
  stroke-width: 0.8;
}

.major {
  fill: none;
  stroke: #c9c9c9;
}

.on-body {
  stroke: #000;
  opacity: 0.12;
}

.minor.on-body {
  opacity: 0.04;
}

.edge {
  fill: none;
  stroke: #15150f;
}

.slot {
  fill: #55564f;
  stroke: #0c0c0a;
  stroke-width: 1.1;
}

.picked-halo {
  stroke: #c9c9c7;
  stroke-width: 8;
  stroke-linecap: round;
}

.picked {
  stroke: #000;
  stroke-width: 3;
}

.cube-text {
  fill: #8c8c90;
  font-size: 11px;
  font-weight: 700;
}

.cube-top {
  fill: #b0b0b0;
  font-size: 7px;
  font-weight: 700;
}

.axis {
  font-size: 12px;
  font-weight: 600;
}

.axis.y {
  fill: #8df58d;
}

.axis.z {
  fill: #8c8cf0;
}

.browser {
  position: absolute;
  top: 4px;
  left: 4px;
  width: 300px;
}

.panel {
  display: flex;
  align-items: center;
  box-sizing: border-box;
  height: 25px;
  padding: 0 1px 0 4px;
  border: 1px solid #cfcfcf;
  background: #f1f1f1;
}

.panel h2 {
  flex: 1;
  margin: 0 0 0 10px;
  padding-bottom: 2px;
  color: #555;
  font-size: 11px;
  font-weight: 400;
}

.grip {
  width: 1px;
  height: 10px;
  margin-left: 7px;
  border: solid #777;
  border-width: 0 1px;
}

.comments {
  position: absolute;
  bottom: 4px;
  left: 4px;
  width: 300px;
}

.comments h2 {
  margin-left: 20px;
}

.tree {
  margin: 3px 0 0;
  padding: 0;
  list-style: none;
  font-size: 11px;
}

.tree li {
  display: flex;
  align-items: center;
  gap: 8px;
  height: 24px;
}

.depth-0 {
  padding-left: 17px;
}

.depth-1 {
  padding-left: 35px;
}

.depth-2 {
  padding-left: 73px;
}

.node {
  display: flex;
  align-items: center;
  gap: 9px;
  height: 20px;
  padding: 0 8px 0 3px;
  background: #f1f1f1;
}

.depth-0 .node {
  gap: 5px;
  padding-right: 7px;
}

.name {
  padding: 0 0 2px 5px;
}

.root {
  display: flex;
  align-items: center;
  gap: 13px;
  height: 16px;
  padding: 0 10px 0 4px;
  background: #929292;
  color: #fff;
  font-size: 12px;
  font-weight: 700;
  line-height: 16px;
}

.navbar {
  position: absolute;
  bottom: 7px;
  left: 50%;
  display: flex;
  gap: 8px;
  height: 23px;
  padding: 0 2px;
  background: #f1f1f1;
  transform: translateX(-50%);
}

.navbar .plain {
  gap: 0;
}

.timeline {
  display: flex;
  flex: none;
  align-items: center;
  height: 49px;
  padding: 0 13px 0 10px;
  border-top: 1px solid #c6c6c6;
}

.player {
  display: flex;
  gap: 11px;
  padding-bottom: 2px;
}

.features {
  position: relative;
  margin-left: 18px;
  padding-top: 2px;
}

.feature-row {
  display: flex;
}

.feature-row button {
  justify-content: center;
  width: 24px;
  height: 24px;
}

.marker {
  position: absolute;
  top: 0;
  right: -6px;
}

.settings {
  margin-left: auto;
}
</style>
